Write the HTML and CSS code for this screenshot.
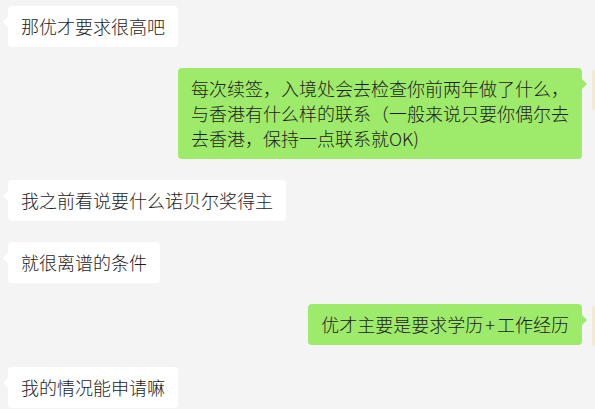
FILE: index.html
```html
<!DOCTYPE html>
<html lang="zh-CN">
<head>
<meta charset="utf-8">
<title>Chat</title>
<link rel="stylesheet" href="styles.css">
</head>
<body>
<div class="chat">
  <div class="msg left"><div class="bubble">那优才要求很高吧</div></div>
  <div class="msg right"><div class="bubble">每次续签，入境处会去检查你前两年做了什么，<br>与香港有什么样的联系（一般来说只要你偶尔去<br>去香港，保持一点联系就OK)</div><div class="avatar-slot"><div class="avatar"></div></div></div>
  <div class="msg left"><div class="bubble">我之前看说要什么诺贝尔奖得主</div></div>
  <div class="msg left"><div class="bubble">就很离谱的条件</div></div>
  <div class="msg right"><div class="bubble">优才主要是要求学历<span class="plus">+</span>工作经历</div><div class="avatar-slot"><div class="avatar"></div></div></div>
  <div class="msg left"><div class="bubble">我的情况能申请嘛</div></div>
</div>
</body>
</html>
```
FILE: styles.css
```css
html, body {
  margin: 0;
  padding: 0;
  overflow: hidden;
  background: #f4f4f4;
}
body {
  width: 595px;
  height: 409px;
  font-family: "Noto Sans CJK SC", "Noto Sans", sans-serif;
  font-weight: 300;
  font-size: 18px;
  color: #1d1d1d;
}
.chat {
  width: 595px;
  display: flex;
  flex-direction: column;
  gap: 21px;
  padding-top: 6px;
  overflow: hidden;
}
.msg {
  display: flex;
  align-items: flex-start;
}
.msg.left {
  padding-left: 8px;
}
.msg.right {
  justify-content: flex-end;
  gap: 10px;
}
.bubble {
  position: relative;
  padding: 8px 13px;
  line-height: 25px;
  border-radius: 4px;
  background: #ffffff;
  white-space: nowrap;
}
.plus {
  padding: 0 2px;
}
.left .bubble::before {
  content: "";
  position: absolute;
  left: -5px;
  top: 11px;
  border-top: 5px solid transparent;
  border-bottom: 5px solid transparent;
  border-right: 5px solid #ffffff;
}
.right .bubble {
  background: #9eea6a;
}
.right .bubble::after {
  content: "";
  position: absolute;
  right: -5px;
  top: 11px;
  border-top: 5px solid transparent;
  border-bottom: 5px solid transparent;
  border-left: 5px solid #9eea6a;
}
.avatar-slot {
  width: 3px;
  height: 42px;
  overflow: hidden;
  flex: none;
}
.avatar {
  width: 40px;
  height: 40px;
  margin-top: 2px;
  background: #efebd6;
  border-radius: 3px;
}
```
